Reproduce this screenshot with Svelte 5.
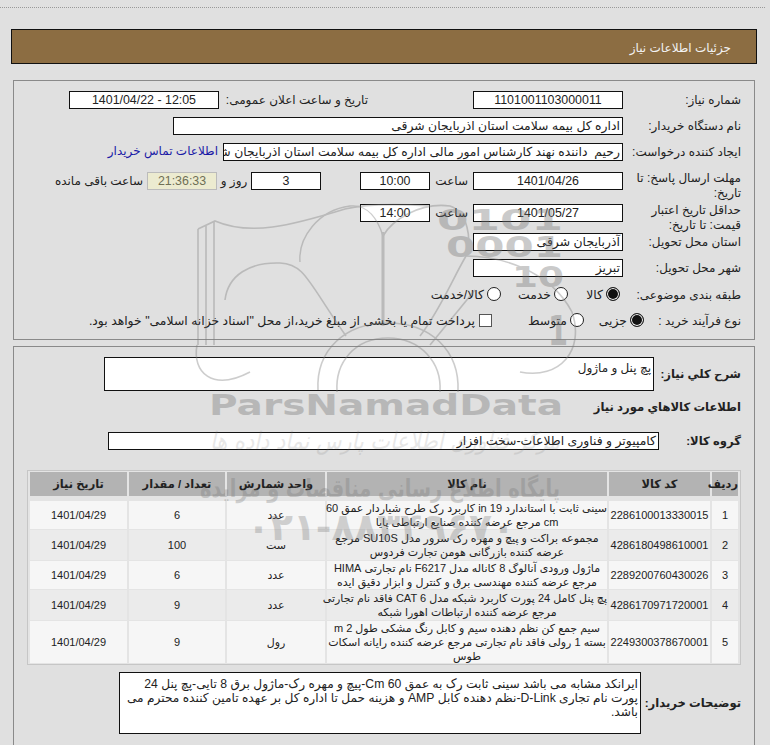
<script>
    const items = [
        { code: '2286100013330015', lines: ['سینی ثابت با استاندارد 19 in کاربرد رک طرح شیاردار عمق 60', 'cm مرجع عرضه کننده صنایع ارتباطی پایا'], unit: 'عدد', qty: '6', h: 'r1' },
        { code: '4286180498610001', lines: ['مجموعه براکت و پیچ و مهره رک سرور مدل SU10S مرجع', 'عرضه کننده بازرگانی هومن تجارت فردوس'], unit: 'ست', qty: '100', h: 'r2' },
        { code: '2289200760430026', lines: ['ماژول ورودی آنالوگ 8 کاناله مدل F6217 نام تجارتی HIMA', 'مرجع عرضه کننده مهندسی برق و کنترل و ابزار دقیق ایده'], unit: 'عدد', qty: '6', h: 'r3' },
        { code: '4286170971720001', lines: ['پچ پنل کامل 24 پورت کاربرد شبکه مدل CAT 6 فاقد نام تجارتی', 'مرجع عرضه کننده ارتباطات اهورا شبکه'], unit: 'عدد', qty: '9', h: 'r4' },
        { code: '2249300378670001', lines: ['سیم جمع کن نظم دهنده سیم و کابل رنگ مشکی طول 2 m', 'بسته 1 رولی فاقد نام تجارتی مرجع عرضه کننده رایانه اسکات', 'طوس'], unit: 'رول', qty: '9', h: 'r5' }
    ];
</script>

<div class="page" dir="rtl">
    <div class="dots"></div>
    <div class="title-bar">جزئیات اطلاعات نیاز</div>

    <section class="panel top">
        <div class="row">
            <div class="lbl">شماره نیاز:</div>
            <div class="box w150 center">1101001103000011</div>
            <div class="lbl2 pub">تاریخ و ساعت اعلان عمومی:</div>
            <div class="box w150 center" dir="ltr">1401/04/22 - 12:05</div>
        </div>
        <div class="row">
            <div class="lbl">نام دستگاه خریدار:</div>
            <div class="box w450">اداره کل بیمه سلامت استان اذربایجان شرقی</div>
        </div>
        <div class="row">
            <div class="lbl">ایجاد کننده درخواست:</div>
            <div class="box w400">رحیم &nbsp;داننده نهند کارشناس امور مالی اداره کل بیمه سلامت استان اذربایجان شرقی</div>
            <a class="contact" href="#top">اطلاعات تماس خریدار</a>
        </div>
        <div class="row">
            <div class="lbl tall">مهلت ارسال پاسخ: تا تاریخ:</div>
            <div class="box w150 center">1401/04/26</div>
            <div class="lbl2 hour">ساعت</div>
            <div class="box w70 center">10:00</div>
            <div class="box w70 center days">3</div>
            <div class="lbl2 and">روز و</div>
            <div class="box w70 center timer">21:36:33</div>
            <div class="lbl2 left">ساعت باقی مانده</div>
        </div>
        <div class="row">
            <div class="lbl tall">حداقل تاریخ اعتبار قیمت: تا تاریخ:</div>
            <div class="box w150 center">1401/05/27</div>
            <div class="lbl2 hour">ساعت</div>
            <div class="box w70 center">14:00</div>
        </div>
        <div class="row">
            <div class="lbl">استان محل تحویل:</div>
            <div class="box w150 high">آذربایجان شرقی</div>
        </div>
        <div class="row">
            <div class="lbl">شهر محل تحویل:</div>
            <div class="box w150">تبریز</div>
        </div>
        <div class="row mid">
            <div class="lbl kind">طبقه بندی موضوعی:</div>
            <div class="opt o1"><span class="radio on"></span>کالا</div>
            <div class="opt o2"><span class="radio"></span>خدمت</div>
            <div class="opt"><span class="radio"></span>کالا/خدمت</div>
        </div>
        <div class="row mid">
            <div class="lbl proc">نوع فرآیند خرید :</div>
            <div class="opt o3"><span class="radio on"></span>جزیی</div>
            <div class="opt o4"><span class="radio"></span>متوسط</div>
            <div class="opt"><span class="check"></span>پرداخت تمام یا بخشی از مبلغ خرید،از محل "اسناد خزانه اسلامی" خواهد بود.</div>
        </div>
    </section>

    <section class="panel bottom">
        <div class="desc-row">
            <div class="blbl">شرح کلي نياز:</div>
            <div class="box summary">پچ پنل و ماژول</div>
        </div>
        <div class="heading">اطلاعات کالاهاي مورد نياز</div>
        <div class="group-row">
            <div class="blbl">گروه کالا:</div>
            <div class="box group">کامپیوتر و فناوری اطلاعات-سخت افزار</div>
        </div>

        <table>
            <thead>
                <tr>
                    <th class="c-idx">ردیف</th>
                    <th class="c-code">کد کالا</th>
                    <th class="c-name">نام کالا</th>
                    <th class="c-unit">واحد شمارش</th>
                    <th class="c-qty">تعداد / مقدار</th>
                    <th>تاریخ نیاز</th>
                </tr>
            </thead>
            <tbody>
                {#each items as item, i}
                    <tr class={item.h}>
                        <td>{i + 1}</td>
                        <td>{item.code}</td>
                        <td>
                            {#each item.lines as line}
                                <div class="line">{line}</div>
                            {/each}
                        </td>
                        <td>{item.unit}</td>
                        <td>{item.qty}</td>
                        <td>1401/04/29</td>
                    </tr>
                {/each}
            </tbody>
        </table>

        <div class="note-row">
            <div class="blbl">توضیحات خریدار:</div>
            <div class="box note">ایرانکد مشابه می باشد سینی ثابت رک به عمق 60 Cm-پیچ و مهره رک-ماژول برق 8 تایی-پچ پنل 24 پورت نام تجاری D-Link-نظم دهنده کابل AMP و هزینه حمل تا اداره کل بر عهده تامین کننده محترم می باشد.</div>
        </div>
    </section>

    <svg class="watermark" width="770" height="745" viewBox="0 0 770 745" aria-hidden="true">
        <g fill="none" stroke="#7d7d7d" stroke-width="1.6">
            <path d="M198 229 L215 221 C250 236 290 226 345 209 C370 203 400 204 430 206" />
            <path d="M198 229 V345 M206 226 V345 M214 222 V345" />
            <path d="M225 300 C228 275 250 262 280 263 C305 264 308 282 346 336" />
            <path d="M197 345 C192 372 212 392 250 372" />
            <path d="M300 262 C298 238 318 210 350 206 C368 204 378 220 383 236" stroke-width="1.4" />
            <path d="M383 232 V326" stroke-width="3" />
            <path d="M383 236 C392 220 420 202 450 206 C468 212 472 240 466 256" />
            <path d="M466 256 C500 256 550 270 572 312 C585 350 560 380 520 372" />
            <path d="M420 336 C440 310 452 280 466 256" />
            <path d="M318 390 C316 350 345 323 388 323 C430 323 460 350 458 392" />
            <path d="M337 392 C335 362 355 338 388 338 C420 338 442 362 440 392" />
            <path d="M475 290 L430 345" />
        </g>
        <g fill="#777" font-family="'DejaVu Sans', sans-serif" font-weight="700" direction="ltr">
            <text x="437" y="230" font-size="29" textLength="126" lengthAdjust="spacingAndGlyphs">0101</text>
            <text x="446" y="257" font-size="29" textLength="117" lengthAdjust="spacingAndGlyphs">0001</text>
            <text x="512" y="287" font-size="29" textLength="52" lengthAdjust="spacingAndGlyphs">10</text>
            <text x="548" y="345" font-size="40" textLength="20" lengthAdjust="spacingAndGlyphs">1</text>
            <text x="209" y="415" font-size="28" textLength="354" lengthAdjust="spacingAndGlyphs">ParsNamadData</text>
        </g>
        <g fill="#777" font-family="'DejaVu Sans', sans-serif" direction="rtl" text-anchor="start">
            <text x="560" y="449" font-size="24" font-style="italic" textLength="350" lengthAdjust="spacingAndGlyphs" opacity=".45">مرکز فناوری اطلاعات پارس نماد داده ها</text>
            <text x="560" y="497" font-size="25" font-weight="700" textLength="360" lengthAdjust="spacingAndGlyphs" opacity=".8">پایگاه اطلاع رسانی مناقصات و مزایده</text>
            <text x="515" y="540" font-size="38" font-weight="700" textLength="268" lengthAdjust="spacingAndGlyphs" opacity=".8">۰۲۱-۸۸۳۴۹۶۷۰</text>
        </g>
    </svg>
</div>

<style>
    :global(body) {
        margin: 0;
        background: #e0e0e0;
    }

    .page {
        position: relative;
        width: 770px;
        height: 745px;
        overflow: hidden;
        padding-top: 7px;
        box-sizing: border-box;
        font-family: "Liberation Sans", "DejaVu Sans", sans-serif;
        font-size: 12.4px;
        color: #222;
    }

    .dots {
        width: 765px;
        margin-right: 5px;
        height: 1px;
        border-top: 1px dotted #999;
    }

    .title-bar {
        width: 746px;
        height: 35px;
        margin: 20px 13px 0 0;
        box-sizing: border-box;
        padding: 11px 25px 0 0;
        background: #8c6d42;
        border: 1px solid #111;
        color: #f2f2f2;
        font-size: 12px;
    }

    .panel {
        width: 742px;
        margin-right: 15px;
        box-sizing: border-box;
        border: 1px solid #8a8a8a;
    }

    .top {
        height: 260px;
        margin-top: 16px;
        padding: 10px 12px 0 0;
        display: grid;
        grid-template-rows: 26px 26px 29px 32px 29px 26px 26px 26px 26px;
    }

    .bottom {
        height: 420px;
        margin-top: 6px;
        padding: 10px 12px 0 0;
    }

    .row {
        display: flex;
        align-items: flex-start;
    }

    .row.mid {
        align-items: center;
        height: 20px;
        margin-top: -1px;
    }

    .lbl {
        width: 119px;
        flex: none;
        box-sizing: border-box;
        padding: 1px 1px 0 0;
        line-height: 16px;
        font-size: 12px;
    }

    .lbl.tall {
        line-height: 15px;
        margin-top: -1px;
        padding-top: 0;
    }

    .lbl.kind { width: 122px; }
    .lbl.proc { width: 98px; }

    .lbl2 {
        flex: none;
        box-sizing: border-box;
        padding-top: 2px;
        font-size: 12px;
    }

    .box {
        flex: none;
        height: 18px;
        box-sizing: border-box;
        background: #fff;
        border: 1px solid #111;
        padding: 0 2px;
        line-height: 16px;
        white-space: nowrap;
        overflow: hidden;
    }

    .center {
        text-align: center;
    }

    .w150 { width: 150px; }
    .w70 { width: 70px; }
    .w450 { width: 450px; }
    .w400 { width: 400px; }

    .pub {
        width: 149px;
        margin-right: 105px;
    }

    .hour {
        width: 43px;
        padding-right: 5px;
    }

    .days {
        margin-right: 39px;
    }

    .and {
        width: 34px;
        text-align: center;
    }

    .timer {
        background: #ecebd0;
        color: #6f6f55;
        border-color: #bbb;
    }

    .left {
        margin-right: 4px;
    }

    .contact {
        margin-right: 5px;
        padding-top: 1px;
        color: #1a1aa6;
        text-decoration: none;
        white-space: nowrap;
        font-size: 12px;
    }

    .opt {
        display: flex;
        align-items: center;
        flex: none;
        white-space: nowrap;
    }

    .o1 { width: 52px; }
    .o2 { width: 67px; }
    .o3 { width: 60px; }
    .o4 { width: 92px; }

    .radio {
        width: 14px;
        height: 14px;
        flex: none;
        box-sizing: border-box;
        border: 1px solid #222;
        border-radius: 50%;
        background: #fff;
        margin-left: 3px;
    }

    .radio.on {
        background: #111;
        box-shadow: inset 0 0 0 1px #fff;
    }

    .check {
        width: 13px;
        height: 13px;
        flex: none;
        box-sizing: border-box;
        border: 1px solid #555;
        background: #fff;
        margin-left: 4px;
    }

    .blbl {
        font-weight: 700;
        font-size: 11.6px;
        flex: none;
        box-sizing: border-box;
        padding-right: 1px;
        white-space: nowrap;
    }

    .desc-row,
    .group-row,
    .note-row {
        display: flex;
        align-items: center;
    }

    .desc-row .blbl {
        width: 88px;
    }

    .summary {
        width: 550px;
        height: 34px;
        padding-top: 3px;
        font-size: 12px;
        line-height: 15px;
    }

    .heading {
        font-weight: 700;
        font-size: 11.6px;
        margin-top: 8px;
        height: 33px;
        line-height: 16px;
        padding-right: 1px;
    }

    .group-row .blbl {
        width: 83px;
    }

    .group {
        width: 551px;
    }

    table {
        margin: 20px 1px 0 0;
        width: 714px;
        table-layout: fixed;
        border-collapse: separate;
        border-spacing: 2px 1px;
        border: 1px solid #c6c6c6;
        background: #e4e4e4;
        text-align: center;
        font-size: 11px;
    }

    th {
        height: 24px;
        background: #b3b3b3;
        font-weight: 700;
        font-size: 11.4px;
        padding: 0;
        border-bottom: 4px solid #e4e4e4;
    }

    .c-idx { width: 26px; }
    .c-code { width: 101px; }
    .c-name { width: 280px; }
    .c-unit { width: 98px; }
    .c-qty { width: 96px; }

    td {
        padding: 0;
        line-height: 14px;
        background: #f6f6f6;
    }

    tbody tr:nth-child(even) td {
        background: #ebebeb;
    }

    .line {
        white-space: nowrap;
    }

    .r1 td { height: 28px; }
    .r2 td { height: 30px; }
    .r3 td { height: 28px; }
    .r4 td { height: 30px; }
    .r5 td { height: 41px; }

    .note-row {
        margin-top: 7px;
    }

    .note-row .blbl {
        width: 101px;
    }

    .note {
        width: 522px;
        height: 62px;
        padding: 4px 2px 0;
        white-space: normal;
        line-height: 14px;
        font-size: 12.2px;
    }

    .watermark {
        position: absolute;
        top: 0;
        left: 0;
        opacity: 0.38;
        pointer-events: none;
    }
</style>
